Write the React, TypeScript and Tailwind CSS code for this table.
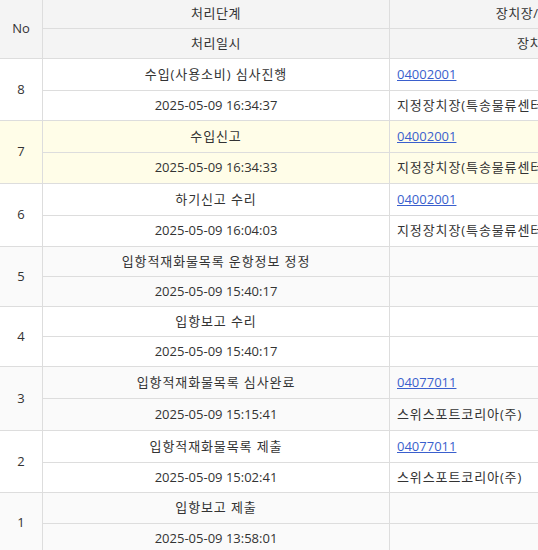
type Step = {
  no: number;
  stage: string;
  time: string;
  code?: string;
  place?: string;
  topH: string;
  botH: string;
  bg: string;
};

const steps: Step[] = [
  { no: 8, stage: "수입(사용소비) 심사진행", time: "2025-05-09 16:34:37", code: "04002001", place: "지정장치장(특송물류센터)", topH: "h-[32px]", botH: "h-[30px]", bg: "bg-white" },
  { no: 7, stage: "수입신고", time: "2025-05-09 16:34:33", code: "04002001", place: "지정장치장(특송물류센터)", topH: "h-[32px]", botH: "h-[31px]", bg: "bg-[#fffde8]" },
  { no: 6, stage: "하기신고 수리", time: "2025-05-09 16:04:03", code: "04002001", place: "지정장치장(특송물류센터)", topH: "h-[32px]", botH: "h-[31px]", bg: "bg-white" },
  { no: 5, stage: "입항적재화물목록 운항정보 정정", time: "2025-05-09 15:40:17", topH: "h-[30px]", botH: "h-[30px]", bg: "bg-[#fafafa]" },
  { no: 4, stage: "입항보고 수리", time: "2025-05-09 15:40:17", topH: "h-[30px]", botH: "h-[30px]", bg: "bg-white" },
  { no: 3, stage: "입항적재화물목록 심사완료", time: "2025-05-09 15:15:41", code: "04077011", place: "스위스포트코리아(주)", topH: "h-[32px]", botH: "h-[32px]", bg: "bg-[#fafafa]" },
  { no: 2, stage: "입항적재화물목록 제출", time: "2025-05-09 15:02:41", code: "04077011", place: "스위스포트코리아(주)", topH: "h-[32px]", botH: "h-[30px]", bg: "bg-white" },
  { no: 1, stage: "입항보고 제출", time: "2025-05-09 13:58:01", topH: "h-[31px]", botH: "h-[30px]", bg: "bg-[#fafafa]" },
];

function StepRow({ step }: { step: Step }) {
  return (
    <div className={`flex ${step.bg}`}>
      <div className="w-[43px] shrink-0 flex items-center justify-center border-r border-b border-[#dddddd]">
        {step.no}
      </div>
      <div className="flex flex-col">
        <div className={`flex ${step.topH} border-b border-[#dddddd]`}>
          <div className="w-[347px] shrink-0 flex items-center justify-center border-r border-[#dddddd] tracking-[0.9px]">
            {step.stage}
          </div>
          <div className="w-[304px] shrink-0 flex items-center px-[7px]">
            {step.code ? (
              <a href="#" className="text-[#3a5fcd] underline">
                {step.code}
              </a>
            ) : null}
          </div>
        </div>
        <div className={`flex ${step.botH} border-b border-[#dddddd]`}>
          <div className="w-[347px] shrink-0 flex items-center justify-center border-r border-[#dddddd]">
            {step.time}
          </div>
          <div className="w-[304px] shrink-0 flex items-center px-[7px] whitespace-nowrap tracking-[0.9px]">
            {step.place}
          </div>
        </div>
      </div>
    </div>
  );
}

export default function App() {
  return (
    <div className="w-[538px] h-[550px] overflow-hidden bg-white">
      <div
        className="w-[694px] text-[13px] text-[#333333]"
        style={{ fontFamily: '"Open Sans", "Noto Sans CJK KR", sans-serif' }}
      >
        <div className="flex bg-[#f4f4f4]">
          <div className="w-[43px] h-[59px] shrink-0 flex items-center justify-center border-r border-b border-[#dddddd]">
            No
          </div>
          <div className="flex flex-col">
            <div className="flex h-[29px] border-b border-[#dddddd]">
              <div className="w-[347px] shrink-0 flex items-center justify-center border-r border-[#dddddd] tracking-[0.5px]">
                처리단계
              </div>
              <div className="w-[304px] shrink-0 flex items-center justify-center tracking-[0.5px]">
                장치장/장치장명
              </div>
            </div>
            <div className="flex h-[30px] border-b border-[#dddddd]">
              <div className="w-[347px] shrink-0 flex items-center justify-center border-r border-[#dddddd] tracking-[0.5px]">
                처리일시
              </div>
              <div className="w-[304px] shrink-0 flex items-center justify-center tracking-[0.5px]">
                장치장명
              </div>
            </div>
          </div>
        </div>
        {steps.map((s) => (
          <StepRow key={s.no} step={s} />
        ))}
      </div>
    </div>
  );
}
